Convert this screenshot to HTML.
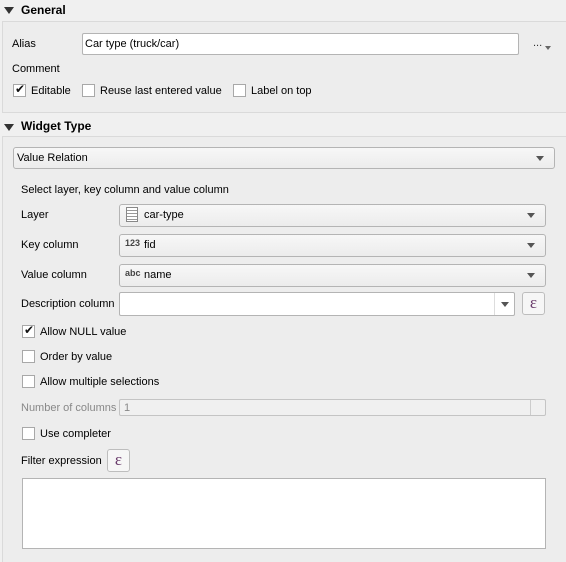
<!DOCTYPE html>
<html><head><style>
html,body{margin:0;overflow:hidden}
body{width:566px;height:562px;background:#f0f0f0;font-family:"Liberation Sans",sans-serif;font-size:11px;color:#000;position:relative}
.a{position:absolute;white-space:nowrap}
.grp{position:absolute;border:1px solid #dadada;background:#ededed}
.tri{position:absolute;width:0;height:0;border-left:5px solid transparent;border-right:5px solid transparent;border-top:7px solid #333}
.h{font-weight:bold;font-size:12px}
.inp{position:absolute;background:#fff;border:1px solid #b4b4b4;border-radius:2px;box-sizing:border-box}
.cb{position:absolute;background:linear-gradient(#f7f7f7,#ececec);border:1px solid #b4b4b4;border-radius:3px;box-sizing:border-box}
.cb:after{content:"";position:absolute;right:10px;top:8px;border-left:4px solid transparent;border-right:4px solid transparent;border-top:5px solid #555}
.chk{position:absolute;width:13px;height:13px;border:1px solid #a8a8a8;background:#fff;box-sizing:border-box}
.chk.on:after{content:"✔";position:absolute;left:1px;top:-3px;font-size:12px;color:#111}
.eps{position:absolute;width:23px;height:23px;box-sizing:border-box;border:1px solid #bdbdbd;border-radius:3px;background:#f6f6f6;color:#6a3c6c;font-family:"Liberation Serif",serif;font-size:17px;text-align:center;line-height:20px}
</style></head><body>
<div class="tri" style="left:4px;top:7px"></div>
<div class="a h" style="left:21px;top:3px">General</div>
<div class="grp" style="left:2px;top:21px;width:570px;height:90px"></div>
<div class="a" style="left:12px;top:38px">Alias</div>
<div class="inp" style="left:82px;top:33px;width:437px;height:22px"></div>
<div class="a" style="left:85px;top:38px">Car type (truck/car)</div>
<div class="a" style="left:533px;top:37px;color:#333">...</div>
<div class="a" style="left:545px;top:46px;border-left:3px solid transparent;border-right:3px solid transparent;border-top:4px solid #666"></div>
<div class="a" style="left:12px;top:63px">Comment</div>
<div class="chk on" style="left:13px;top:84px"></div><div class="a" style="left:31px;top:85px">Editable</div>
<div class="chk" style="left:82px;top:84px"></div><div class="a" style="left:100px;top:85px">Reuse last entered value</div>
<div class="chk" style="left:233px;top:84px"></div><div class="a" style="left:251px;top:85px">Label on top</div>

<div class="tri" style="left:4px;top:124px"></div>
<div class="a h" style="left:21px;top:119px">Widget Type</div>
<div class="grp" style="left:2px;top:136px;width:570px;height:430px"></div>
<div class="cb" style="left:13px;top:147px;width:542px;height:22px"></div>
<div class="a" style="left:17px;top:152px">Value Relation</div>

<div class="a" style="left:21px;top:184px">Select layer, key column and value column</div>
<div class="a" style="left:21px;top:209px">Layer</div>
<div class="cb" style="left:119px;top:204px;width:427px;height:23px"></div>
<div class="a" style="left:126px;top:207px;width:12px;height:15px;border:1px solid #888;box-sizing:border-box;background:repeating-linear-gradient(#fff 0 2px,#999 2px 3px)"></div>
<div class="a" style="left:144px;top:209px">car-type</div>
<div class="a" style="left:21px;top:239px">Key column</div>
<div class="cb" style="left:119px;top:234px;width:427px;height:23px"></div>
<div class="a" style="left:125px;top:238px;font-size:9px;color:#444;font-weight:bold">123</div>
<div class="a" style="left:144px;top:239px">fid</div>
<div class="a" style="left:21px;top:269px">Value column</div>
<div class="cb" style="left:119px;top:264px;width:427px;height:23px"></div>
<div class="a" style="left:125px;top:268px;font-size:9px;color:#444;font-weight:bold">abc</div>
<div class="a" style="left:144px;top:269px">name</div>
<div class="a" style="left:21px;top:298px">Description column</div>
<div class="inp" style="left:119px;top:292px;width:396px;height:24px"></div>
<div class="a" style="left:494px;top:293px;width:1px;height:22px;background:#ddd"></div>
<div class="a" style="left:501px;top:302px;border-left:4px solid transparent;border-right:4px solid transparent;border-top:5px solid #555"></div>
<div class="eps" style="left:522px;top:292px">ε</div>
<div class="chk on" style="left:22px;top:325px"></div><div class="a" style="left:40px;top:326px">Allow NULL value</div>
<div class="chk" style="left:22px;top:350px"></div><div class="a" style="left:40px;top:351px">Order by value</div>
<div class="chk" style="left:22px;top:375px"></div><div class="a" style="left:40px;top:376px">Allow multiple selections</div>
<div class="a" style="left:21px;top:402px;color:#888">Number of columns</div>
<div class="inp" style="left:119px;top:399px;width:427px;height:17px;background:#f0f0f0;border-color:#c4c4c4"></div>
<div class="a" style="left:124px;top:402px;color:#888">1</div>
<div class="a" style="left:530px;top:400px;width:1px;height:15px;background:#ccc"></div>
<div class="chk" style="left:22px;top:427px"></div><div class="a" style="left:40px;top:428px">Use completer</div>
<div class="a" style="left:21px;top:455px">Filter expression</div>
<div class="eps" style="left:107px;top:449px">ε</div>
<div class="inp" style="left:22px;top:478px;width:524px;height:71px;border-radius:0"></div>
</body></html>
